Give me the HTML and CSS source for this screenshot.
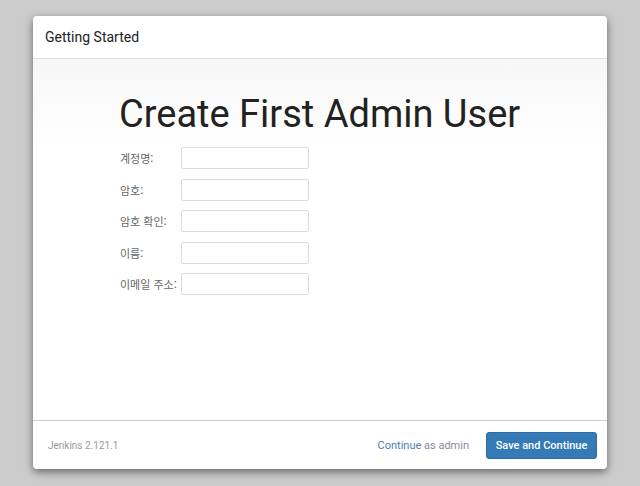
FILE: index.html
```html
<!DOCTYPE html>
<html lang="ko">
<head>
<meta charset="utf-8">
<title>Getting Started</title>
<link rel="stylesheet" href="styles.css">
</head>
<body>
<div class="dialog">
  <div class="dialog-header">Getting Started</div>
  <div class="dialog-body">
    <h1 class="title">Create First Admin User</h1>
    <form class="form">
      <label class="lbl" for="u">계정명:</label><input class="inp" id="u" type="text">
      <label class="lbl" for="p1">암호:</label><input class="inp" id="p1" type="password">
      <label class="lbl" for="p2">암호 확인:</label><input class="inp" id="p2" type="password">
      <label class="lbl" for="n">이름:</label><input class="inp" id="n" type="text">
      <label class="lbl" for="e">이메일 주소:</label><input class="inp" id="e" type="text">
    </form>
  </div>
  <div class="dialog-footer">
    <span class="version">Jenkins 2.121.1</span>
    <div class="actions">
      <span class="skip"><a class="link" href="#">Continue</a> as admin</span>
      <button class="btn" type="button">Save and Continue</button>
    </div>
  </div>
</div>
</body>
</html>
```
FILE: styles.css
```css
html, body {
  margin: 0;
  padding: 0;
}
body {
  background: #cccccc;
  height: 486px;
  display: flex;
  justify-content: center;
  padding-top: 16px;
  box-sizing: border-box;
  font-family: Roboto, "Noto Sans CJK KR", sans-serif;
}
.dialog {
  width: 574px;
  height: 453px;
  background: #fff;
  border-radius: 4px;
  box-shadow: 0 3px 9px rgba(0, 0, 0, 0.5);
  display: flex;
  flex-direction: column;
  overflow: hidden;
}
.dialog-header {
  height: 43px;
  box-sizing: border-box;
  border-bottom: 1px solid #e2e2e2;
  padding: 0 12px;
  display: flex;
  align-items: center;
  font-size: 14px;
  color: #222;
}
.dialog-body {
  flex: 1;
  background: linear-gradient(to bottom, #f7f7f7 0, #ffffff 90px, #ffffff 100%);
  padding: 0 0 0 86px;
}
.title {
  margin: 29px 0 7px 0;
  font-size: 38px;
  font-weight: 400;
  line-height: 52px;
  color: #222;
  letter-spacing: 0;
}
.form {
  display: grid;
  grid-template-columns: auto 128px;
  column-gap: 4px;
  row-gap: 9.5px;
  align-items: center;
  justify-content: start;
  padding-left: 1px;
}
.lbl {
  font-family: "Noto Sans CJK KR", sans-serif;
  font-size: 11px;
  color: #666;
  line-height: 14px;
}
.inp {
  width: 128px;
  height: 22px;
  box-sizing: border-box;
  border: 1px solid #dcdcdc;
  border-radius: 2px;
  background: #fff;
  padding: 0 4px;
  margin: 0;
}
.dialog-footer {
  height: 49px;
  box-sizing: border-box;
  border-top: 1px solid #cfcfcf;
  display: flex;
  align-items: center;
  justify-content: space-between;
  padding: 0 10px 0 15px;
}
.version {
  font-size: 10px;
  color: #999;
}
.actions {
  display: flex;
  align-items: center;
  gap: 17px;
}
.skip {
  font-size: 11px;
  color: #8a8a9a;
}
.link {
  color: #4a7fb5;
  text-decoration: none;
}
.btn {
  width: 111px;
  height: 27px;
  box-sizing: border-box;
  background: #337ab7;
  border: 1px solid #2e6da4;
  border-radius: 3px;
  color: #fff;
  font-family: Roboto, sans-serif;
  font-size: 11px;
  font-weight: 500;
  padding: 0;
}
```
